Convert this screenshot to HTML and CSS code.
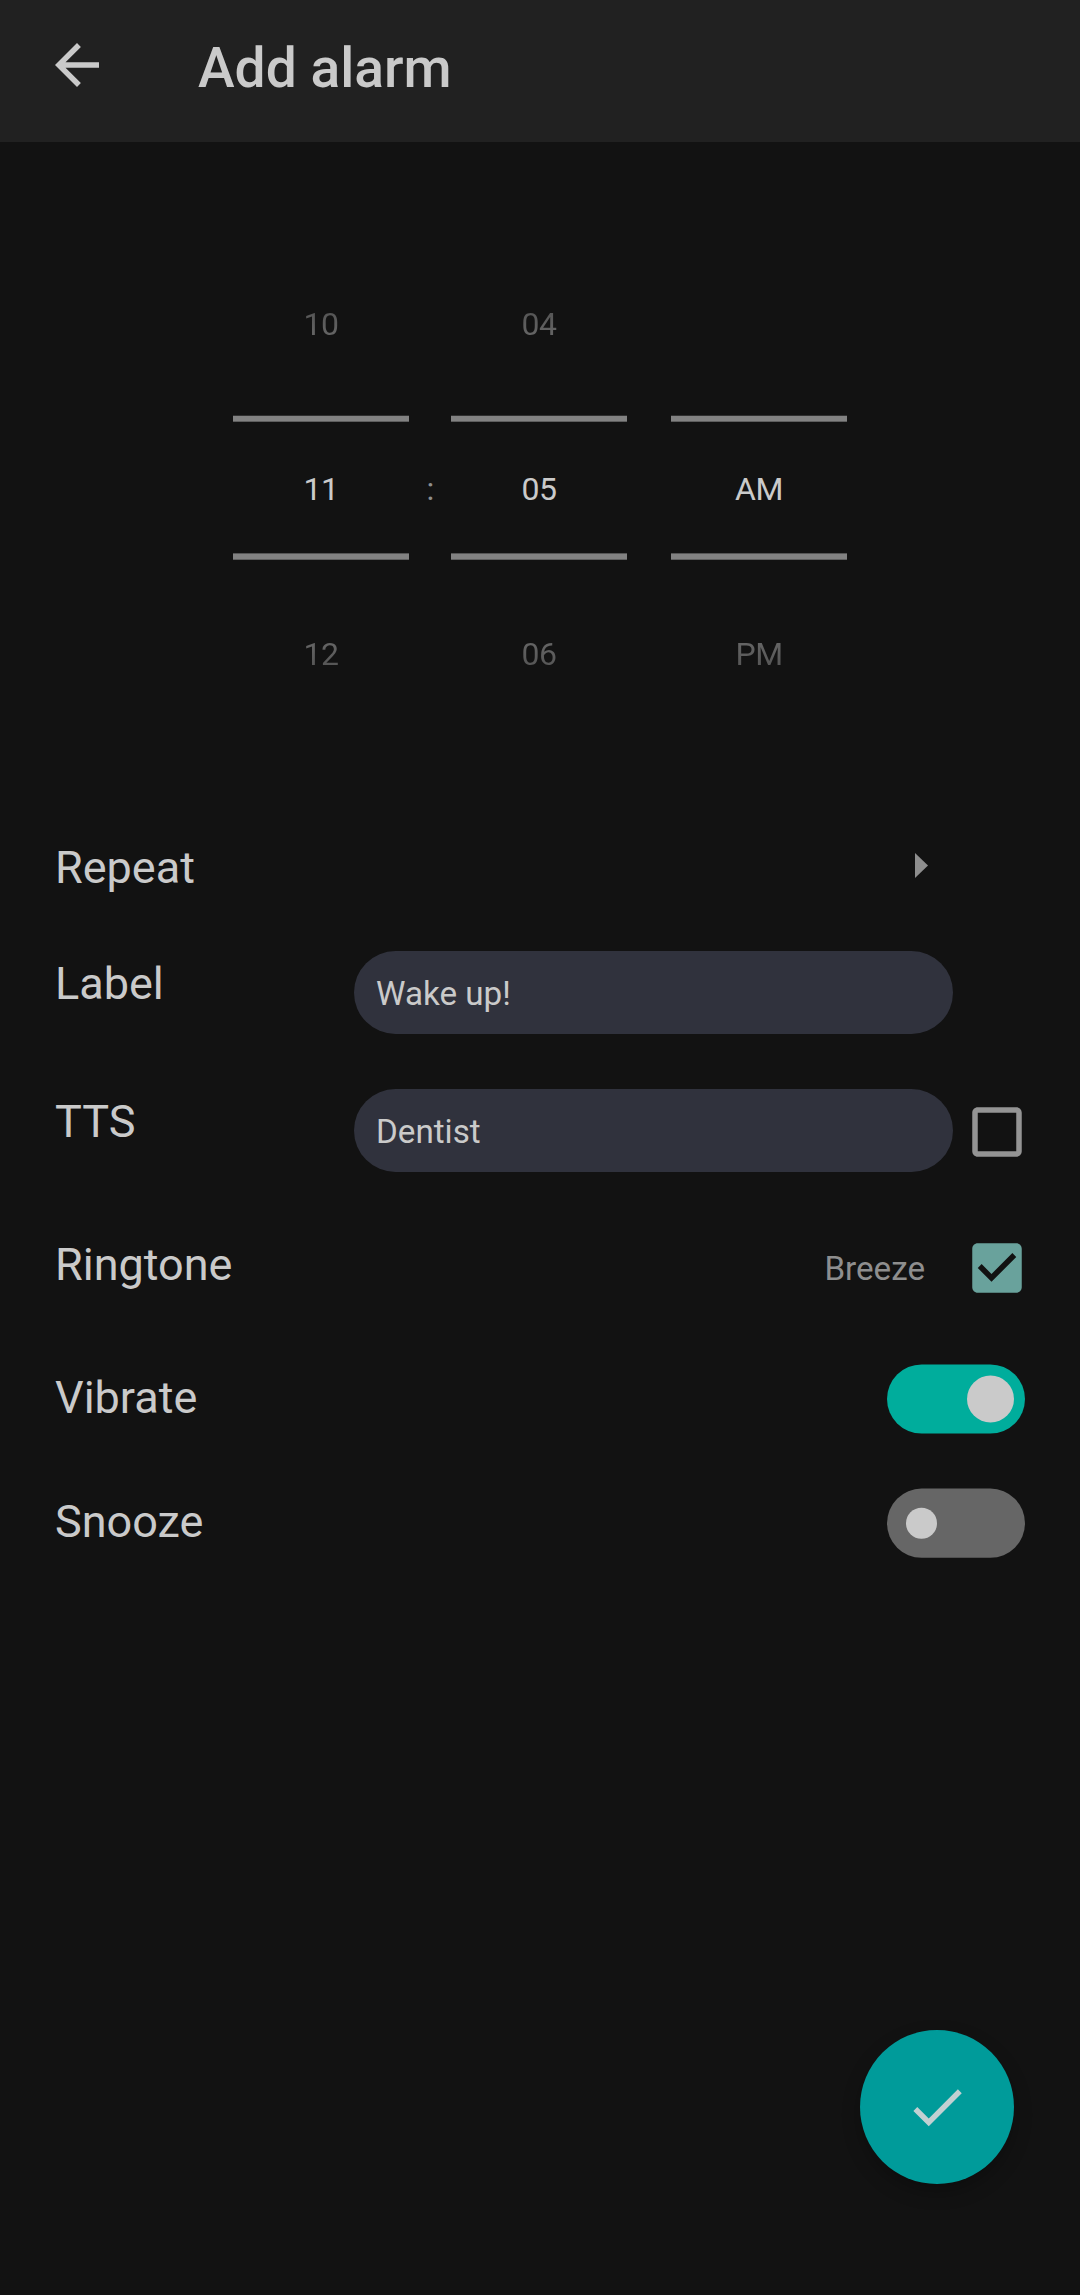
FILE: index.html
```html
<!DOCTYPE html>
<html lang="en">
<head>
<meta charset="utf-8">
<title>Add alarm</title>
<link rel="stylesheet" href="styles.css">
</head>
<body>
<div class="screen">
  <header class="app-bar">
    <svg class="icon" viewBox="0 0 24 24"><path d="M20 11H7.83l5.59-5.59L12 4l-8 8 8 8 1.41-1.41L7.83 13H20v-2z"/></svg>
    <h1 class="title">Add alarm</h1>
  </header>

  <section class="time-picker">
    <div class="wheel">
      <span class="dim above">10</span>
      <i class="line line-top"></i>
      <span class="current">11</span>
      <i class="line line-bottom"></i>
      <span class="dim below">12</span>
    </div>
    <span class="colon">:</span>
    <div class="wheel">
      <span class="dim above">04</span>
      <i class="line line-top"></i>
      <span class="current">05</span>
      <i class="line line-bottom"></i>
      <span class="dim below">06</span>
    </div>
    <div class="wheel wheel-period">
      <span class="dim above"></span>
      <i class="line line-top"></i>
      <span class="current">AM</span>
      <i class="line line-bottom"></i>
      <span class="dim below">PM</span>
    </div>
  </section>

  <main class="settings">
    <div class="row row-repeat">
      <span class="label">Repeat</span>
      <svg class="arrow" viewBox="0 0 13 25"><path d="M0 0L13 12.5L0 25z"/></svg>
    </div>
    <div class="row row-text">
      <span class="label">Label</span>
      <div class="field">Wake up!</div>
    </div>
    <div class="row row-text row-tts">
      <span class="label">TTS</span>
      <div class="field">Dentist</div>
      <svg class="checkbox" viewBox="0 0 24 24"><path d="M19 5v14H5V5h14m0-2H5c-1.1 0-2 .9-2 2v14c0 1.1.9 2 2 2h14c1.1 0 2-.9 2-2V5c0-1.1-.9-2-2-2z"/></svg>
    </div>
    <div class="row row-ringtone">
      <span class="label">Ringtone</span>
      <span class="value">Breeze</span>
      <svg class="checkbox checked" viewBox="0 0 24 24"><path d="M19 3H5c-1.11 0-2 .9-2 2v14c0 1.1.89 2 2 2h14c1.11 0 2-.9 2-2V5c0-1.1-.89-2-2-2zm-9 14l-5-5 1.41-1.41L10 14.17l7.59-7.59L19 8l-9 9z"/></svg>
    </div>
    <div class="row row-vibrate">
      <span class="label">Vibrate</span>
      <svg class="switch on" viewBox="0 0 138 70"><rect y=".4" width="138" height="69.2" rx="34.6"/><circle cx="103.5" cy="35" r="23.5"/></svg>
    </div>
    <div class="row row-snooze">
      <span class="label">Snooze</span>
      <svg class="switch" viewBox="0 0 138 70"><rect y=".6" width="138" height="69.2" rx="34.6"/><circle cx="34.5" cy="35.3" r="15.5"/></svg>
    </div>
  </main>

  <footer class="actions">
    <div class="fab"><svg class="icon" viewBox="0 0 24 24"><path d="M9 16.17L4.83 12l-1.42 1.41L9 19 21 7l-1.41-1.41z"/></svg></div>
  </footer>
</div>
</body>
</html>
```
FILE: styles.css
```css
* {
  box-sizing: border-box;
}

body {
  margin: 0;
  background: #121212;
  color: #cacaca;
  font-family: Roboto, sans-serif;
}

.screen {
  display: flex;
  flex-direction: column;
  width: 1080px;
  height: 2295px;
}

svg {
  display: block;
  flex: none;
  fill: currentColor;
}

.icon {
  width: 66px;
  height: 66px;
}

/* App bar */
.app-bar {
  display: flex;
  gap: 88px;
  height: 142px;
  padding: 32px 44px 0;
  background: #212121;
}

.title {
  margin: 4px 0 0;
  font-size: 55.2px;
  font-weight: 500;
  line-height: 64px;
}

/* Time picker */
.time-picker {
  display: grid;
  grid-template-columns: 176px 42px 176px 176px;
  padding: 162px 0 0 233px;
  height: 699px;
  font-size: 32px;
  letter-spacing: -.5px;
  line-height: 40px;
  text-align: center;
}

.wheel {
  display: grid;
  grid-template-rows: 40px 71px 7px 47px 40px 44px 7px 74px 40px;
}

.wheel-period {
  margin-left: 44px;
  width: 176px;
}

.above {
  grid-row: 1;
}

.line-top {
  grid-row: 3;
  background: linear-gradient(#303030 1px, #828282 1px 6px, #5e5e5e 6px);
}

.current {
  grid-row: 5;
}

.line-bottom {
  grid-row: 7;
  background: linear-gradient(#565656 1px, #828282 1px 6px, #606060 6px);
}

.below {
  grid-row: 9;
}

.dim {
  color: transparent;
  background-clip: text;
  -webkit-background-clip: text;
}

.above {
  background-image: linear-gradient(#505050, #6a6a6a);
}

.below {
  background-image: linear-gradient(#6a6a6a, #505050);
}

.colon {
  padding-top: 165px;
  color: #8e8e8e;
}

/* Settings rows */
.settings {
  display: flex;
  flex-direction: column;
  padding: 0 55px;
}

.row {
  display: flex;
  align-items: flex-start;
}

.label {
  flex: 1;
  font-size: 45px;
  line-height: 54px;
}

.row-repeat {
  height: 110px;
}

.arrow {
  width: 13px;
  height: 25px;
  margin: 12px 97px 0 0;
  color: #8e8e8e;
}

.row-text {
  height: 138px;
}

.row-text .label {
  flex: 0 0 299px;
  padding-top: 6px;
}

.field {
  flex: none;
  width: 599px;
  height: 83px;
  padding: 23px 22px 0;
  border-radius: 41.5px;
  background: #30323d;
  font-size: 33.2px;
  line-height: 40px;
}

.checkbox {
  width: 66px;
  height: 66px;
  margin-right: -5px;
  color: #949494;
}

.row-tts {
  height: 146px;
}

.row-tts .checkbox {
  margin: 10px -5px 0 11px;
}

.row-ringtone {
  height: 129px;
}

.row-ringtone .label {
  padding-top: 3px;
}

.value {
  margin: 14px 39px 0 0;
  color: #8e8e8e;
  font-size: 33.2px;
  line-height: 40px;
}

.checked {
  color: #69a29c;
}

.row-vibrate {
  height: 124px;
}

.row-vibrate .label,
.row-snooze .label {
  padding-top: 7px;
}

.switch {
  width: 138px;
  height: 70px;
  color: #666;
}

.switch circle {
  fill: #cacaca;
}

.switch.on {
  color: #00ad9c;
}

/* Confirm button */
.actions {
  display: flex;
  justify-content: flex-end;
  margin-top: auto;
  padding: 0 66px 111.5px;
}

.fab {
  display: grid;
  place-items: center;
  width: 154px;
  height: 154px;
  border-radius: 50%;
  background: #009b9a;
  color: #c2d0d2;
  box-shadow: 0 8px 18px rgba(0, 0, 0, .25);
}
```
